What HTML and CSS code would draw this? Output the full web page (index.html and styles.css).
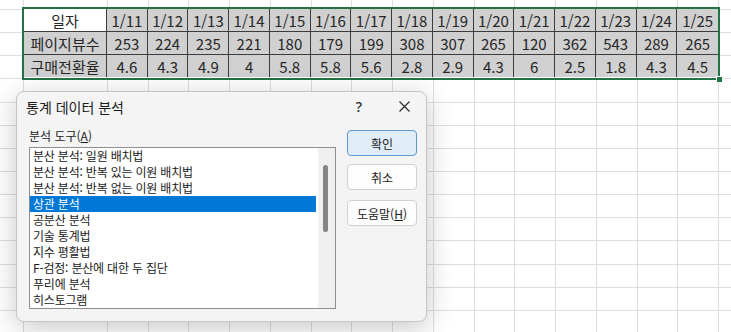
FILE: index.html
```html
<!DOCTYPE html>
<html lang="ko">
<head>
<meta charset="utf-8">
<link rel="stylesheet" href="styles.css">
</head>
<body>
<div class="sheet">
  <div class="selection">
    <div class="grid">
      <div class="cell white">일자</div>
      <div class="cell">1/11</div><div class="cell">1/12</div><div class="cell">1/13</div><div class="cell">1/14</div><div class="cell">1/15</div><div class="cell">1/16</div><div class="cell">1/17</div><div class="cell">1/18</div><div class="cell">1/19</div><div class="cell">1/20</div><div class="cell">1/21</div><div class="cell">1/22</div><div class="cell">1/23</div><div class="cell">1/24</div><div class="cell last">1/25</div>
      <div class="cell">페이지뷰수</div>
      <div class="cell">253</div><div class="cell">224</div><div class="cell">235</div><div class="cell">221</div><div class="cell">180</div><div class="cell">179</div><div class="cell">199</div><div class="cell">308</div><div class="cell">307</div><div class="cell">265</div><div class="cell">120</div><div class="cell">362</div><div class="cell">543</div><div class="cell">289</div><div class="cell last">265</div>
      <div class="cell bottom">구매전환율</div>
      <div class="cell bottom">4.6</div><div class="cell bottom">4.3</div><div class="cell bottom">4.9</div><div class="cell bottom">4</div><div class="cell bottom">5.8</div><div class="cell bottom">5.8</div><div class="cell bottom">5.6</div><div class="cell bottom">2.8</div><div class="cell bottom">2.9</div><div class="cell bottom">4.3</div><div class="cell bottom">6</div><div class="cell bottom">2.5</div><div class="cell bottom">1.8</div><div class="cell bottom">4.3</div><div class="cell bottom last">4.5</div>
    </div>
    <span class="handle"></span>
  </div>

  <div class="dialog">
    <div class="titlebar">
      <span class="title">통계 데이터 분석</span>
      <span class="help">?</span>
      <span class="close"><svg width="11" height="11" viewBox="0 0 11 11"><path d="M0.5 0.5 L10.5 10.5 M10.5 0.5 L0.5 10.5" stroke="#262626" stroke-width="1.1" fill="none"/></svg></span>
    </div>
    <div class="content">
      <div class="leftcol">
        <div class="label">분석 도구(<u>A</u>)</div>
        <div class="listbox">
          <div class="items">
            <div class="item">분산 분석: 일원 배치법</div>
            <div class="item">분산 분석: 반복 있는 이원 배치법</div>
            <div class="item">분산 분석: 반복 없는 이원 배치법</div>
            <div class="item sel">상관 분석</div>
            <div class="item">공분산 분석</div>
            <div class="item">기술 통계법</div>
            <div class="item">지수 평활법</div>
            <div class="item">F-검정: 분산에 대한 두 집단</div>
            <div class="item">푸리에 분석</div>
            <div class="item">히스토그램</div>
          </div>
          <div class="scrollbar"><div class="thumb"></div></div>
        </div>
      </div>
      <div class="buttons">
        <div class="btn primary">확인</div>
        <div class="btn">취소</div>
        <div class="btn help-btn">도움말(<u>H</u>)</div>
      </div>
    </div>
  </div>
</div>
</body>
</html>
```

FILE: styles.css
```css
html, body {
  margin: 0;
  padding: 0;
  background: #ffffff;
}

body {
  font-family: "Noto Sans CJK KR", "Noto Sans", sans-serif;
  color: #1b1b1b;
}

.sheet {
  position: relative;
  width: 731px;
  height: 332px;
  overflow: hidden;
  box-sizing: border-box;
  padding-top: 7px;
  padding-left: 22px;
  background-image:
    linear-gradient(to right, #dedede 0 1px, transparent 1px),
    repeating-linear-gradient(to right, #dedede 0 1px, transparent 1px 40.733px),
    repeating-linear-gradient(to bottom, #dedede 0 1px, transparent 1px 23.15px);
  background-repeat: no-repeat;
  background-position: 23px 0, 107px 0, 0 9px;
  background-size: 1px 100%, 624px 100%, 100% 330px;
}

.selection {
  position: relative;
  width: 694px;
  border: 2px solid #217346;
}

.grid {
  display: grid;
  grid-template-columns: 83px repeat(15, 1fr);
  grid-auto-rows: 23px;
}

.cell {
  box-sizing: border-box;
  background: #d0d0d0;
  border-right: 1px solid #3c3c3c;
  border-bottom: 1px solid #3c3c3c;
  display: flex;
  align-items: center;
  justify-content: center;
  font-size: 15px;
  color: #262626;
  white-space: nowrap;
  overflow: hidden;
}

.cell.white { background: #ffffff; }
.cell.last { border-right: none; }
.cell.bottom { border-bottom: none; height: 22px; }

.handle {
  position: absolute;
  right: -5px;
  bottom: -5px;
  width: 5px;
  height: 5px;
  background: #217346;
  border: 1px solid #ffffff;
}

.dialog {
  position: absolute;
  left: 16px;
  top: 91px;
  width: 411px;
  height: 231px;
  box-sizing: border-box;
  background: #f4f4f4;
  border: 1px solid #c4c4c4;
  border-radius: 8px;
  box-shadow: 0 6px 28px rgba(0, 0, 0, 0.22);
  display: flex;
  flex-direction: column;
}

.titlebar {
  height: 29px;
  display: flex;
  align-items: center;
  padding-left: 9px;
  padding-right: 12px;
}

.title {
  flex: 1;
  font-size: 14px;
  color: #1b1b1b;
}

.help {
  width: 20px;
  margin-right: 25px;
  text-align: center;
  font-size: 14px;
  font-weight: 500;
  font-family: "Noto Sans", sans-serif;
  color: #262626;
}

.close {
  width: 20px;
  height: 20px;
  display: flex;
  align-items: center;
  justify-content: center;
}

.content {
  display: flex;
  padding: 7px 0 0 12px;
  gap: 11px;
}

.leftcol {
  width: 307px;
}

.label {
  font-size: 12px;
  line-height: 16px;
  height: 16px;
  margin-bottom: 3px;
  color: #1b1b1b;
}

.label u, .btn u {
  text-underline-offset: 1px;
}

.listbox {
  display: flex;
  width: 307px;
  height: 162px;
  box-sizing: border-box;
  border: 1px solid #8e8e8e;
  background: #ffffff;
}

.items {
  flex: 1;
  padding-right: 2px;
}

.item {
  height: 16px;
  line-height: 16px;
  padding-left: 3px;
  font-size: 12px;
  letter-spacing: -0.2px;
  color: #1b1b1b;
  white-space: nowrap;
}

.item.sel {
  background: #0078d7;
  color: #ffffff;
}

.scrollbar {
  width: 17px;
  box-sizing: border-box;
  background: #f0f0f0;
  padding: 17px 0 0 5px;
}

.thumb {
  width: 5px;
  height: 67px;
  border-radius: 3px;
  background: #858585;
}

.buttons {
  display: flex;
  flex-direction: column;
  margin-top: 2px;
}

.btn {
  width: 70px;
  height: 26px;
  box-sizing: border-box;
  border: 1px solid #d0d0d0;
  border-radius: 4px;
  background: #fdfdfd;
  display: flex;
  align-items: center;
  justify-content: center;
  font-size: 12px;
  color: #1b1b1b;
  margin-bottom: 8px;
}

.btn.primary {
  background: #e0ecf8;
  border-color: #5b9bd5;
}

.btn.help-btn {
  margin-top: 2px;
}
```
